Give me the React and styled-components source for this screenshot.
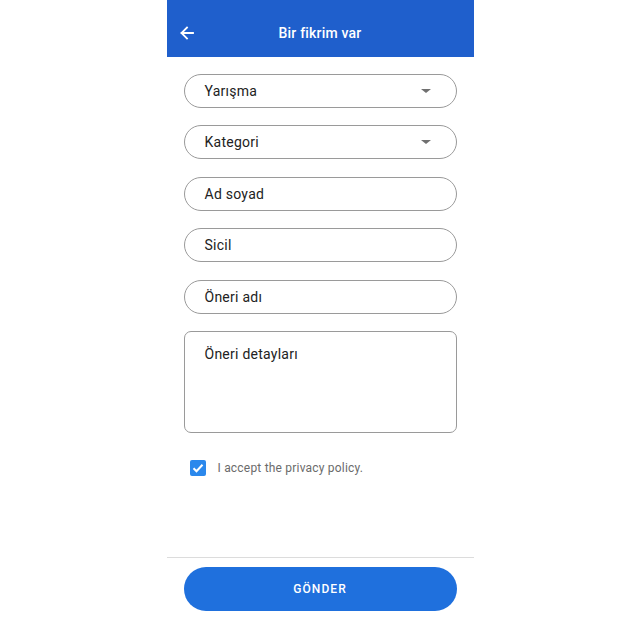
import React from 'react';
import styled, {createGlobalStyle} from 'styled-components';

const GlobalStyle = createGlobalStyle`
  html, body {
    margin: 0;
    padding: 0;
    background: #fff;
    font-family: Roboto, "Noto Sans", sans-serif;
  }
`;

const Screen = styled.div`
  width: 307px;
  height: 640px;
  margin: 0 auto;
  display: flex;
  flex-direction: column;
  background: #fff;
`;

const Header = styled.header`
  height: 57px;
  box-sizing: border-box;
  padding-top: 9px;
  background: #1f5fcc;
  display: flex;
  align-items: center;
  position: relative;
  color: #fff;
  > h1 {
    flex: 1;
    margin: 0;
    text-align: center;
    font-size: 14px;
    font-weight: 500;
    letter-spacing: 0.2px;
  }
`;

const BackButton = styled.button`
  position: absolute;
  left: 8px;
  top: 33px;
  transform: translateY(-50%);
  width: 24px;
  height: 24px;
  padding: 0;
  border: none;
  background: transparent;
  display: flex;
  align-items: center;
  justify-content: center;
`;

const Form = styled.div`
  flex: 1;
  display: flex;
  flex-direction: column;
  gap: 17.4px;
  padding: 17px 17px 0;
`;

const Field = styled.div`
  height: ${p => (p.multiline ? '102px' : '34px')};
  flex-shrink: 0;
  box-sizing: border-box;
  border: 1px solid #9a9a9a;
  border-radius: ${p => (p.multiline ? '7px' : '17px')};
  display: flex;
  align-items: ${p => (p.multiline ? 'flex-start' : 'center')};
  justify-content: space-between;
  padding: ${p => (p.multiline ? '14px 20px' : '0 20px')};
  font-size: 14px;
  color: #222;
  letter-spacing: 0.25px;
`;

const Caret = styled.span`
  width: 0;
  height: 0;
  border-left: 5px solid transparent;
  border-right: 5px solid transparent;
  border-top: 4.5px solid #707070;
  margin-right: 5px;
`;

const CheckRow = styled.label`
  display: flex;
  align-items: center;
  gap: 12px;
  padding-left: 6px;
  margin-top: 10px;
  font-size: 12px;
  color: #6b6b6b;
  letter-spacing: 0.2px;
`;

const Box = styled.span`
  width: 16px;
  height: 16px;
  border-radius: 2px;
  background: #2b88ec;
  display: flex;
  align-items: center;
  justify-content: center;
`;

const Footer = styled.footer`
  border-top: 1px solid #dcdcdc;
  padding: 9px 17px 29px;
`;

const SubmitButton = styled.button`
  width: 100%;
  height: 44px;
  border: none;
  border-radius: 22px;
  background: #1f70dd;
  color: #fff;
  font-family: Roboto, sans-serif;
  font-size: 12px;
  font-weight: 500;
  letter-spacing: 1.1px;
`;

const fields = [
    {label: 'Yarışma', select: true},
    {label: 'Kategori', select: true},
    {label: 'Ad soyad'},
    {label: 'Sicil'},
    {label: 'Öneri adı'},
];

const App = () => {
    return (
        <>
            <GlobalStyle/>
            <Screen>
                <Header>
                    <BackButton aria-label="geri">
                        <svg width="16" height="16" viewBox="0 0 16 16" fill="none" stroke="#fff" strokeWidth="1.8" strokeLinecap="square">
                            <path d="M14 8H2.5M8 2.5L2.5 8L8 13.5"/>
                        </svg>
                    </BackButton>
                    <h1>Bir fikrim var</h1>
                </Header>
                <Form>
                    {fields.map(f => (
                        <Field key={f.label}>
                            <span>{f.label}</span>
                            {f.select ? <Caret/> : null}
                        </Field>
                    ))}
                    <Field multiline>
                        <span>Öneri detayları</span>
                    </Field>
                    <CheckRow>
                        <Box>
                            <svg width="14" height="14" viewBox="0 0 14 14" fill="none" stroke="#fff" strokeWidth="2">
                                <path d="M2.5 7.2L5.5 10.2L11.5 3.8"/>
                            </svg>
                        </Box>
                        I accept the privacy policy.
                    </CheckRow>
                </Form>
                <Footer>
                    <SubmitButton>GÖNDER</SubmitButton>
                </Footer>
            </Screen>
        </>
    );
};

export default App;
